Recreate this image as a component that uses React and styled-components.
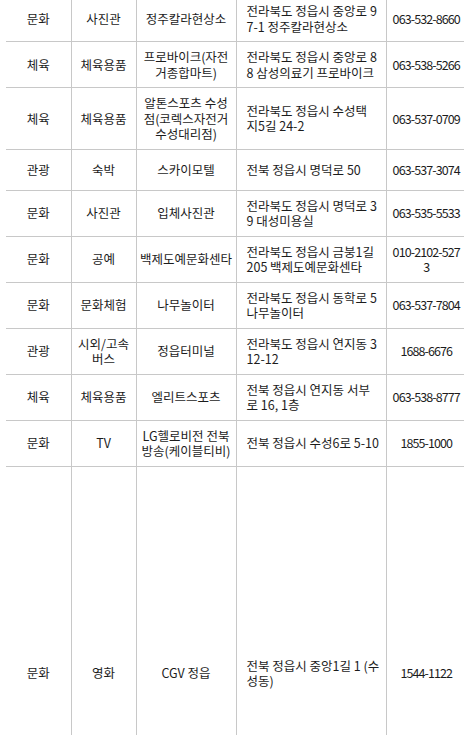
import React from 'react';
import styled, { createGlobalStyle } from 'styled-components';

const GlobalStyle = createGlobalStyle`
	html,
	body {
		margin: 0;
		padding: 0;
		overflow: hidden;
		background: #fff;
	}
`;

// line breaks follow the original listing
const places = [
	['문화', '사진관', '정주칼라현상소', '전라북도 정읍시 중앙로 9\n7-1 정주칼라현상소', '063-532-8660'],
	['체육', '체육용품', '프로바이크(자전\n거종합마트)', '전라북도 정읍시 중앙로 8\n8 삼성의료기 프로바이크', '063-538-5266'],
	['체육', '체육용품', '알톤스포츠 수성\n점(코렉스자전거\n수성대리점)', '전라북도 정읍시 수성택\n지5길 24-2', '063-537-0709'],
	['관광', '숙박', '스카이모텔', '전북 정읍시 명덕로 50', '063-537-3074'],
	['문화', '사진관', '입체사진관', '전라북도 정읍시 명덕로 3\n9 대성미용실', '063-535-5533'],
	['문화', '공예', '백제도예문화센타', '전라북도 정읍시 금붕1길\n205 백제도예문화센타', '010-2102-527\n3'],
	['문화', '문화체험', '나무놀이터', '전라북도 정읍시 동학로 5\n나무놀이터', '063-537-7804'],
	['관광', '시외/고속\n버스', '정읍터미널', '전라북도 정읍시 연지동 3\n12-12', '1688-6676'],
	['체육', '체육용품', '엘리트스포츠', '전북 정읍시 연지동 서부\n로 16, 1층', '063-538-8777'],
	['문화', 'TV', 'LG헬로비전 전북\n방송(케이블티비)', '전북 정읍시 수성6로 5-10', '1855-1000'],
	['문화', '영화', 'CGV 정읍', '전북 정읍시 중앙1길 1 (수\n성동)', '1544-1122']
];

const columns = [
	{ width: 65, pad: 2, align: 'center' },
	{ width: 65, pad: 2, align: 'center' },
	{ width: 100, pad: 2, align: 'center' },
	{ width: 150, pad: 10, padRight: 2, align: 'left' },
	{ width: 80, pad: 1, align: 'center', tight: true }
];

const App = () => {
	return (
		<>
			<GlobalStyle />
			<Wrapper>
				<Table>
					<colgroup>
						{columns.map((col, i) => (
							<Col key={i} $width={col.width} />
						))}
					</colgroup>
					<tbody>
						{places.map((place, r) => (
							<Row key={r} $height={r === places.length - 1 ? 414 : 41}>
								{place.map((text, c) => (
									<Cell
										key={c}
										$align={columns[c].align}
										$pad={columns[c].pad}
										$padRight={columns[c].padRight}
										$tight={columns[c].tight}
										$first={c === 0}
									>
										{text}
									</Cell>
								))}
							</Row>
						))}
					</tbody>
				</Table>
			</Wrapper>
		</>
	);
};

const Wrapper = styled.main`
	padding-left: 6px;
	margin-top: -4px;
	width: 470px;
`;

const Table = styled.table`
	width: 460px;
	table-layout: fixed;
	border-collapse: collapse;
	font-family: 'Noto Sans CJK KR', 'Noto Sans', sans-serif;
	font-size: 12.5px;
	line-height: 15.5px;
	color: #1c1c1c;
`;

const Col = styled.col`
	width: ${(p) => p.$width}px;
`;

const Row = styled.tr`
	height: ${(p) => p.$height}px;
`;

const Cell = styled.td`
	padding: 7px ${(p) => p.$padRight || p.$pad}px 7px ${(p) => p.$pad}px;
	text-align: ${(p) => p.$align};
	vertical-align: middle;
	white-space: pre;
	overflow: hidden;
	letter-spacing: ${(p) => (p.$tight ? '-0.9px' : '0')};
	border-bottom: 1px solid #c8c8c8;
	border-left: ${(p) => (p.$first ? 'none' : '1px solid #c8c8c8')};
`;

export default App;
